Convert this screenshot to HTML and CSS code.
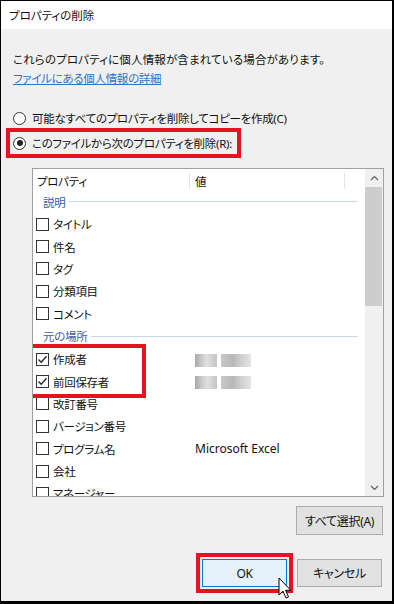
FILE: index.html
```html
<!DOCTYPE html>
<html lang="ja">
<head>
    <meta charset="UTF-8">
    <meta name="viewport" content="width=device-width, initial-scale=1.0">
    <title>プロパティの削除</title>
    <link rel="stylesheet" href="styles.css">
</head>
<body>
    <div class="dialog">
        <div class="titlebar">プロパティの削除</div>

        <div class="content">
            <p class="intro">これらのプロパティに個人情報が含まれている場合があります。</p>
            <a class="link" href="#">ファイルにある個人情報の詳細</a>

            <div class="options">
                <div class="option">
                    <span class="radio"></span>
                    <span>可能なすべてのプロパティを削除してコピーを作成(C)</span>
                </div>
                <div class="option marked">
                    <span class="radio on"></span>
                    <span>このファイルから次のプロパティを削除(R):</span>
                </div>
            </div>

            <div class="listbox">
                <div class="list">
                    <div class="list-head">
                        <span class="col-prop">プロパティ</span>
                        <span class="col-val">値</span>
                    </div>

                    <div class="group">説明</div>
                    <div class="row"><span class="cell"><span class="check"></span>タイトル</span></div>
                    <div class="row"><span class="cell"><span class="check"></span>件名</span></div>
                    <div class="row"><span class="cell"><span class="check"></span>タグ</span></div>
                    <div class="row"><span class="cell"><span class="check"></span>分類項目</span></div>
                    <div class="row"><span class="cell"><span class="check"></span>コメント</span></div>

                    <div class="group">元の場所</div>
                    <div class="picked">
                        <div class="row">
                            <span class="cell"><span class="check"><svg viewBox="0 0 11 11"><path d="M1.5 5.5 L4.2 8.2 L9.5 2.3"/></svg></span>作成者</span>
                            <span class="val"><span class="blur"><i></i><i></i></span></span>
                        </div>
                        <div class="row">
                            <span class="cell"><span class="check"><svg viewBox="0 0 11 11"><path d="M1.5 5.5 L4.2 8.2 L9.5 2.3"/></svg></span>前回保存者</span>
                            <span class="val"><span class="blur"><i></i><i></i></span></span>
                        </div>
                    </div>
                    <div class="row"><span class="cell"><span class="check"></span>改訂番号</span></div>
                    <div class="row"><span class="cell"><span class="check"></span>バージョン番号</span></div>
                    <div class="row"><span class="cell"><span class="check"></span>プログラム名</span><span class="val">Microsoft Excel</span></div>
                    <div class="row"><span class="cell"><span class="check"></span>会社</span></div>
                    <div class="row"><span class="cell"><span class="check"></span>マネージャー</span></div>
                </div>

                <div class="scrollbar">
                    <span class="arrow"><svg viewBox="0 0 9 6"><path d="M1 5 L4.5 1.5 L8 5"/></svg></span>
                    <span class="thumb"></span>
                    <span class="track"></span>
                    <span class="arrow"><svg viewBox="0 0 9 6"><path d="M1 1 L4.5 4.5 L8 1"/></svg></span>
                </div>
            </div>

            <div class="select-row">
                <button class="btn wide">すべて選択(A)</button>
            </div>

            <div class="footer">
                <div class="ok-wrap"><button class="btn ok">OK</button></div>
                <button class="btn">キャンセル</button>
            </div>
        </div>
    </div>

    <svg class="cursor" width="14" height="23" viewBox="0 0 14 23">
        <path d="M1 1 L1 18 L5 14.2 L8 21 L10.5 20 L7.6 13.3 L12.8 13.3 Z"/>
    </svg>
</body>
</html>
```

FILE: styles.css
```css
* {
    box-sizing: border-box;
}

body {
    margin: 0;
    font-family: "Noto Sans", "Noto Sans CJK JP", sans-serif;
    font-size: 11.5px;
    letter-spacing: -0.3px;
    font-feature-settings: "palt";
    color: #111;
}

.dialog {
    width: 394px;
    height: 604px;
    border-style: solid;
    border-color: #000;
    border-width: 1px 2px 3px 1px;
    background: #f0f0f0;
    display: flex;
    flex-direction: column;
}

.titlebar {
    height: 28px;
    background: #fff;
    padding-left: 8px;
    display: flex;
    align-items: center;
    letter-spacing: 0;
}

.content {
    flex: 1;
    padding: 23px 8px 0 12px;
    display: flex;
    flex-direction: column;
}

.intro {
    margin: 0;
    line-height: 16px;
    letter-spacing: 0.15px;
}

.link {
    margin-top: 3px;
    line-height: 16px;
    color: #2f74c8;
    align-self: flex-start;
}

/* radio buttons */
.options {
    margin-top: 21px;
    display: flex;
    flex-direction: column;
    align-items: flex-start;
}

.option {
    height: 20px;
    display: flex;
    align-items: center;
    gap: 6px;
}

.option.marked {
    height: 30px;
    margin-left: -7px;
    padding: 0 5px 0 3px;
    border: 4px solid #e3131f;
}

.radio {
    width: 13px;
    height: 13px;
    border: 1px solid #333;
    border-radius: 50%;
    background: #fff;
    display: flex;
    align-items: center;
    justify-content: center;
}

.radio.on::after {
    content: "";
    width: 6px;
    height: 6px;
    border-radius: 50%;
    background: #222;
}

/* property list */
.listbox {
    margin-top: 10px;
    margin-left: 19px;
    height: 329px;
    border: 1px solid #a0a0a0;
    background: #fff;
    display: flex;
}

.list {
    flex: 1;
    overflow: hidden;
}

.list-head {
    height: 21px;
    padding-top: 3px;
    display: flex;
    align-items: center;
}

.col-prop {
    width: 157px;
    padding-left: 4px;
    border-right: 1px solid #e5e5e5;
}

.col-val {
    width: 155px;
    padding-left: 5px;
    border-right: 1px solid #e5e5e5;
}

.group {
    height: 23px;
    padding-left: 10px;
    padding-right: 7px;
    color: #3a5aa8;
    display: flex;
    align-items: center;
    gap: 4px;
}

.group::after {
    content: "";
    flex: 1;
    height: 1px;
    background: #c9d6e8;
}

.row {
    height: 22.4px;
    display: flex;
    align-items: center;
}

.cell {
    width: 157px;
    padding-left: 3px;
    display: flex;
    align-items: center;
    gap: 4px;
}

.val {
    padding-left: 5px;
    font-size: 12px;
    letter-spacing: 0;
}

.check {
    width: 13px;
    height: 13px;
    border: 1px solid #333;
    background: #fff;
    display: flex;
}

.check svg {
    width: 11px;
    height: 11px;
    fill: none;
    stroke: #222;
    stroke-width: 1.3;
}

.picked {
    position: relative;
}

.picked::after {
    content: "";
    position: absolute;
    left: -5px;
    top: -4px;
    width: 110px;
    height: 46px;
    border: 4px solid #e3131f;
}

.blur {
    display: inline-flex;
    gap: 4px;
    filter: blur(0.7px);
    vertical-align: middle;
}

.blur i {
    height: 13px;
    width: 22px;
    background: linear-gradient(90deg, #a8a8a8, #cfcfcf 35%, #e0e0e0 55%, #c4c4c4);
}

.blur i + i {
    width: 30px;
    background: linear-gradient(90deg, #c8c8c8, #b8b8b8 40%, #d2d2d2 70%, #e4e4e4);
}

/* scrollbar */
.scrollbar {
    width: 18px;
    background: #f0f0f0;
    display: flex;
    flex-direction: column;
}

.arrow {
    height: 17px;
    display: flex;
    align-items: center;
    justify-content: center;
}

.arrow svg {
    width: 9px;
    height: 6px;
    fill: none;
    stroke: #606060;
    stroke-width: 1.2;
}

.thumb {
    height: 119px;
    margin: 1px 1px 0 0;
    background: #cdcdcd;
}

.track {
    flex: 1;
}

/* buttons */
.select-row {
    margin-top: 9px;
    margin-right: 1px;
    display: flex;
    justify-content: flex-end;
}

.btn {
    width: 85px;
    height: 28px;
    padding: 0;
    font-family: inherit;
    font-size: 12px;
    letter-spacing: -0.3px;
    font-feature-settings: "palt";
    color: #111;
    background: #e1e1e1;
    border: 1px solid #adadad;
}

.btn.wide {
    width: 87px;
    height: 29px;
}

.footer {
    margin-top: 18px;
    margin-right: 2px;
    display: flex;
    justify-content: flex-end;
    align-items: center;
    gap: 4px;
}

.ok-wrap {
    padding: 2px;
    border: 4px solid #e3131f;
}

.btn.ok {
    background: #e5f1fb;
    border-color: #0078d7;
}

.cursor {
    position: absolute;
    left: 278px;
    top: 577px;
    fill: #fff;
    stroke: #000;
    stroke-width: 1;
}
```
